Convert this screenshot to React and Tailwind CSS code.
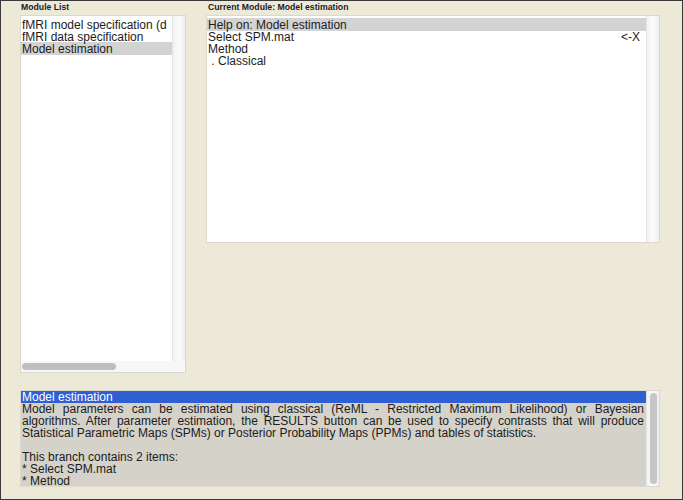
import React from "react";

const font = { fontFamily: '"Liberation Sans", Arial, sans-serif' };

function VScroll({ thumb }) {
  return (
    <div className="w-[13px] shrink-0 bg-gradient-to-r from-[#f1f1f1] via-[#fcfcfc] to-[#eeeeee] border-l border-[#e6e6e6] flex justify-center py-[2px]">
      {thumb && <div className="w-[7px] h-full rounded-full bg-[#c6c6c6]" />}
    </div>
  );
}

export default function App() {
  const moduleList = ["fMRI model specification (d", "fMRI data specification", "Model estimation"];

  return (
    <div
      className="w-[683px] h-[500px] overflow-hidden border border-[#3a3a3a] bg-[#ece9d9] pl-[19px] text-[#1c1c1c]"
      style={font}
    >
      {/* top row */}
      <div className="flex gap-[20px]">
        {/* Module list */}
        <div className="w-[166px]">
          <div className="h-[14px] pl-[1px] text-[8.7px] font-bold leading-[13px]">Module List</div>
          <div className="h-[358px] border border-[#dcd9cc] bg-white flex flex-col">
            <div className="flex flex-1 min-h-0">
              <div className="flex-1 pt-[3px] text-[12px] leading-[12px] whitespace-nowrap overflow-hidden">
                {moduleList.map((m, i) => (
                  <div
                    key={m}
                    className={i === 2 ? "bg-[#d3d3d3] pl-[1px] h-[13px] -mt-[1px] leading-[14px]" : "pl-[1px]"}
                  >
                    {m}
                  </div>
                ))}
              </div>
              <VScroll />
            </div>
            <div className="h-[11px] flex items-center bg-[#f7f7f7] pl-[1px] pr-[13px]">
              <div className="w-[94px] h-[7px] rounded-full bg-[#bfbfbf]" />
            </div>
          </div>
        </div>

        {/* Current module */}
        <div className="w-[454px]">
          <div className="h-[14px] pl-[2px] text-[8.7px] font-bold leading-[13px]">Current Module: Model estimation</div>
          <div className="h-[228px] border border-[#dcd9cc] bg-white flex">
            <div className="flex-1 pt-[2px] text-[12px] leading-[12px]">
              <div className="bg-[#d3d3d3] h-[13px] leading-[14px] pl-[1px]">Help on: Model estimation</div>
              <div className="flex justify-between pl-[1px] pr-[6px]">
                <span>Select SPM.mat</span>
                <span>&lt;-X</span>
              </div>
              <div className="pl-[1px]">Method</div>
              <div className="pl-[1px]"> &nbsp;. Classical</div>
            </div>
            <VScroll />
          </div>
        </div>
      </div>

      {/* help text */}
      <div className="mt-[17px] w-[640px] h-[97px] border border-[#dcd9cc] bg-[#d5d2ca] flex">
        <div className="flex-1 text-[12px] leading-[12px] overflow-hidden">
          <div className="bg-[#2f5fd2] text-white pl-[1px]">Model estimation</div>
          <div className="pl-[1px] pr-[2px]">
            <div className="text-justify [text-align-last:justify]">
              Model parameters can be estimated using classical (ReML - Restricted Maximum Likelihood) or Bayesian
            </div>
            <div className="text-justify [text-align-last:justify]">
              algorithms. After parameter estimation, the RESULTS button can be used to specify contrasts that will produce
            </div>
            <div>Statistical Parametric Maps (SPMs) or Posterior Probability Maps (PPMs) and tables of statistics.</div>
            <div className="h-[12px]" />
            <div>This branch contains 2 items:</div>
            <div>* Select SPM.mat</div>
            <div>* Method</div>
          </div>
        </div>
        <VScroll thumb />
      </div>
    </div>
  );
}
